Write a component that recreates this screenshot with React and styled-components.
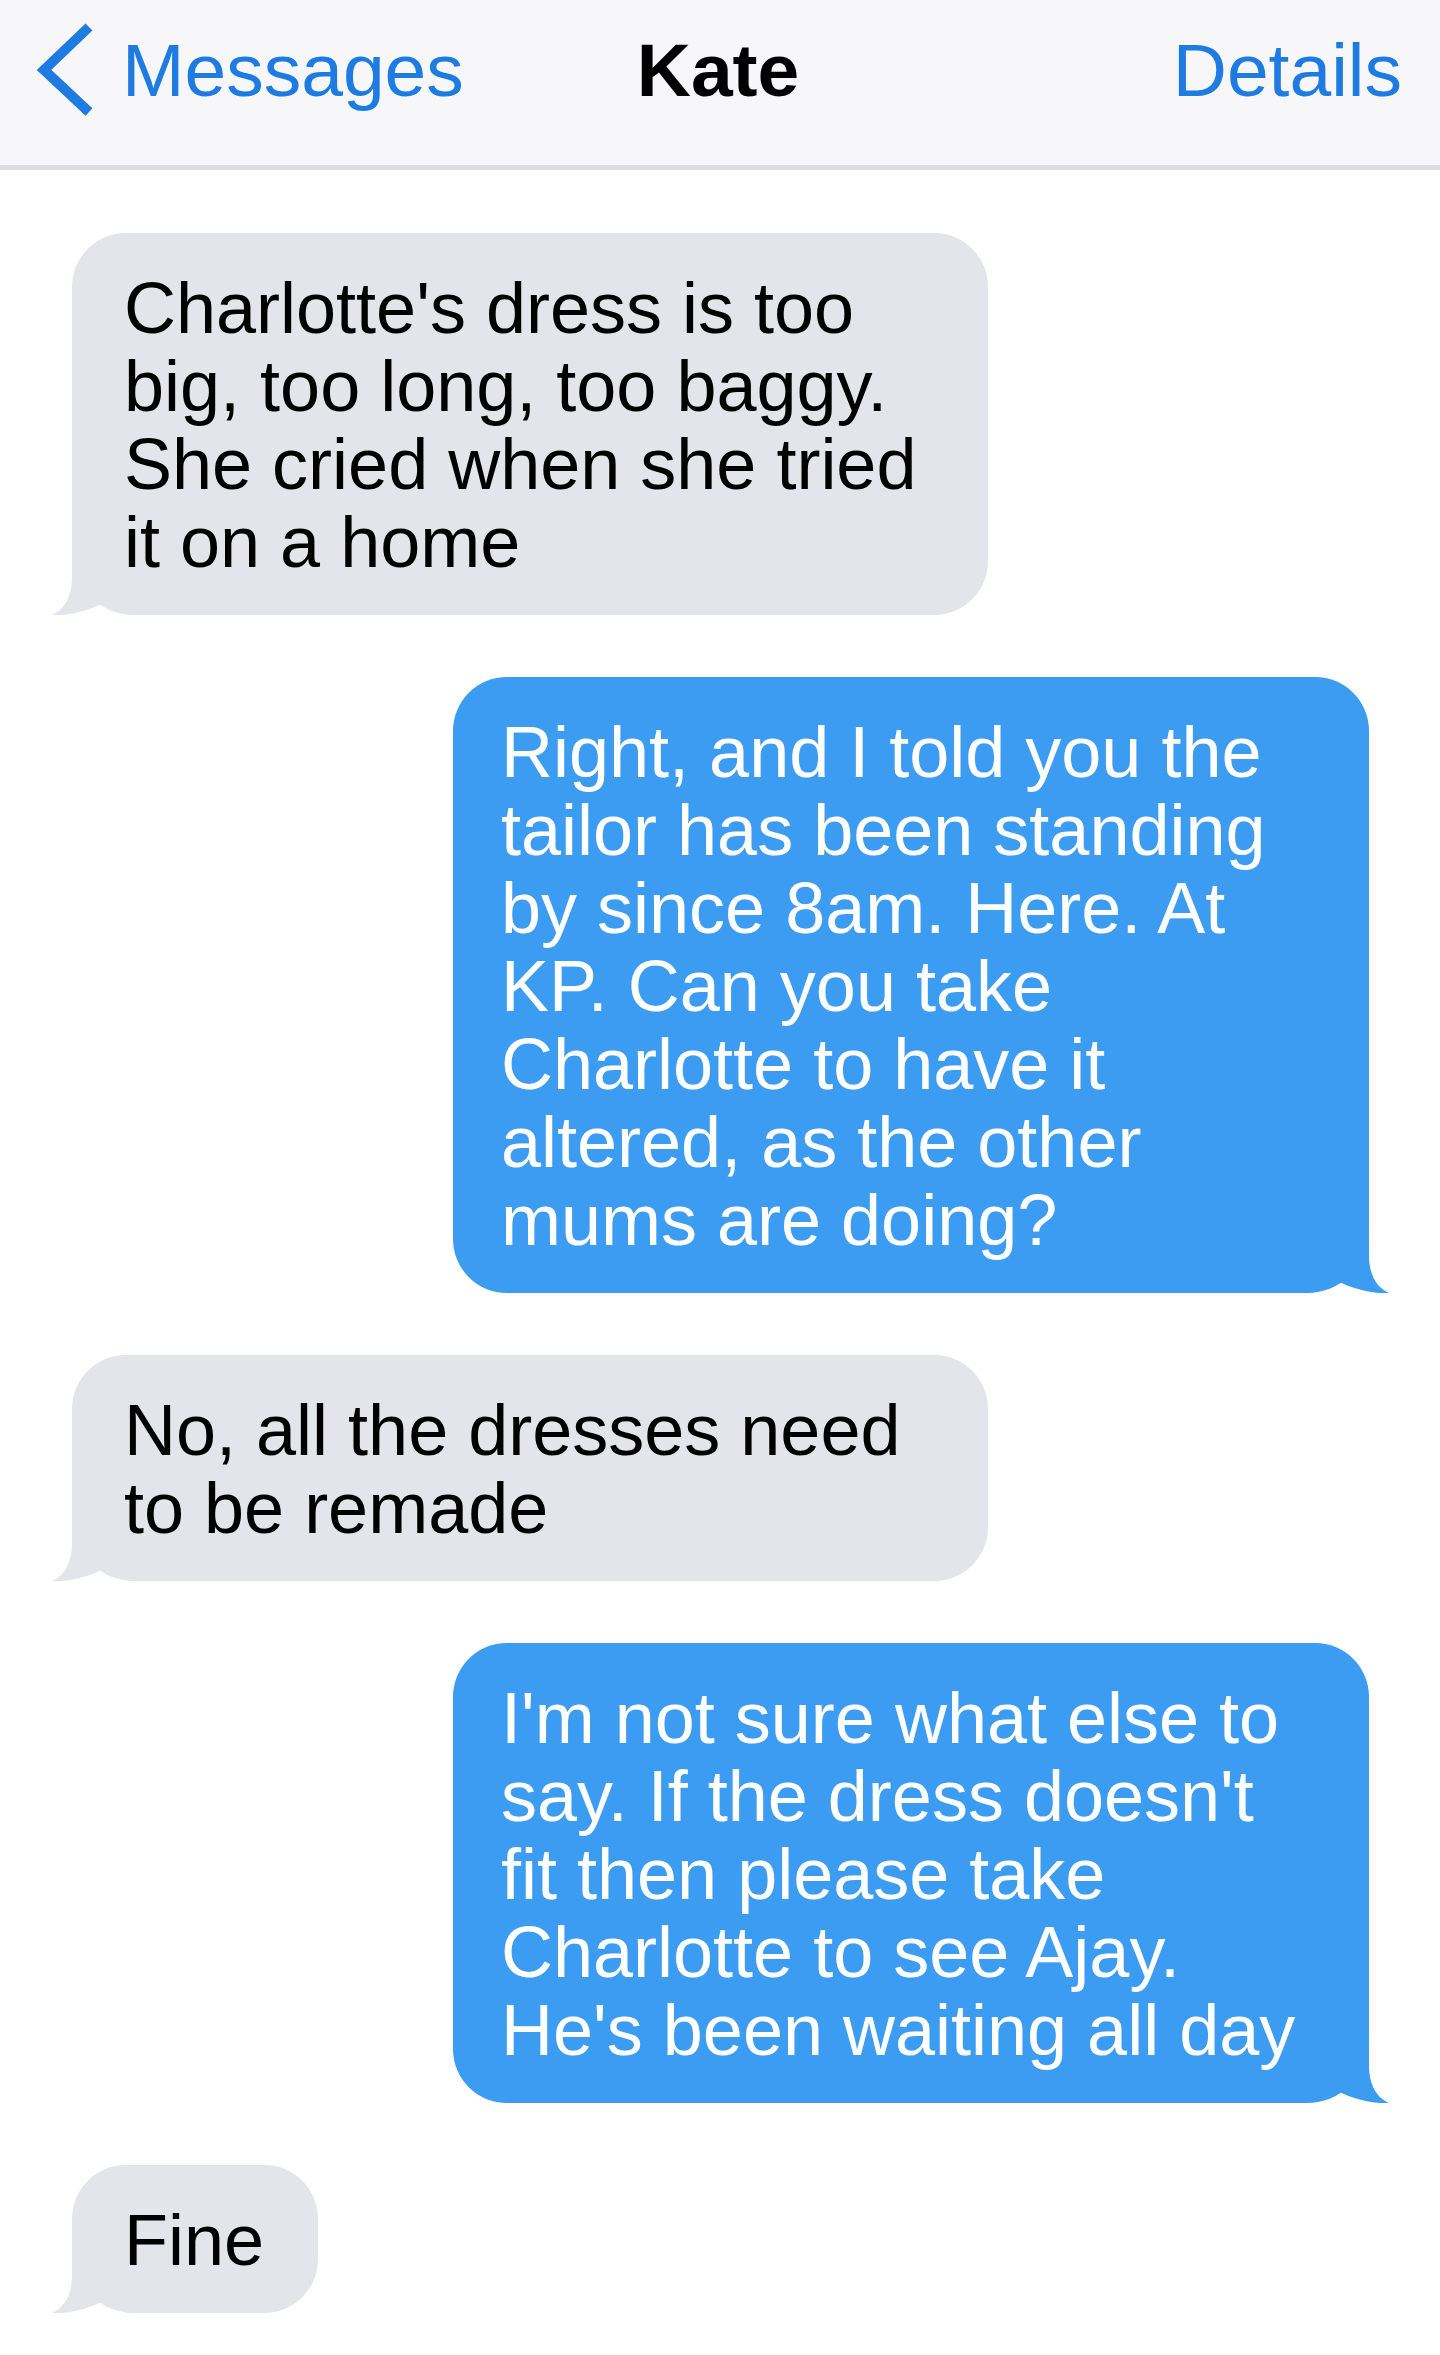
import React from 'react';
import styled, { createGlobalStyle, css } from 'styled-components';

const colors = {
    link: '#1e7be2',
    barBg: '#f7f7f9',
    barLine: '#dcdce1',
    theirs: '#e4e4eb',
    mine: '#3c9cf2',
};

const GlobalStyle = createGlobalStyle`
    html, body {
        margin: 0;
        padding: 0;
        background: #fff;
    }
    body {
        font-family: "Liberation Sans", Arial, Helvetica, sans-serif;
        -webkit-font-smoothing: antialiased;
    }
`;

const Screen = styled.div`
    width: 1440px;
    background: #fff;
`;

const NavBar = styled.header`
    display: grid;
    grid-template-columns: 1fr auto 1fr;
    align-items: start;
    height: 170px;
    padding: 27px 38px 0 34px;
    box-sizing: border-box;
    background: ${colors.barBg};
    border-bottom: 5px solid ${colors.barLine};
    font-size: 75px;
    line-height: 86px;
`;

const BackLink = styled.a`
    display: flex;
    align-items: flex-start;
    gap: 26px;
    color: ${colors.link};
    text-decoration: none;

    svg {
        flex: none;
        margin-top: -7px;
    }
`;

const Title = styled.div`
    color: #000;
    font-weight: 700;
`;

const DetailsLink = styled.a`
    justify-self: end;
    color: ${colors.link};
    text-decoration: none;
`;

const Thread = styled.main`
    display: flex;
    flex-direction: column;
    gap: 62px;
    padding: 63px 71px 42px 72px;
`;

// iOS 7 style hook at the bottom corner of a bubble
const tail = css`
    &::before {
        content: '';
        position: absolute;
        bottom: 0;
        width: 64px;
        height: 60px;
        background: inherit;
        clip-path: path('M20,0 L20,22 C20,44 11,55 0,60 C16,61 36,56 52,48 L64,38 L64,0 Z');
    }
`;

const Bubble = styled.div`
    position: relative;
    box-sizing: border-box;
    max-width: 916px;
    width: fit-content;
    font-size: 72px;
    line-height: 78px;
    border-radius: 54px;

    ${tail}

    ${(p) => p.$mine ? css`
        align-self: flex-end;
        padding: 36px 54px 34px 48px;
        background: ${colors.mine};
        color: #fff;
        border-bottom-right-radius: 62px;

        &::before {
            right: -20px;
            transform: scaleX(-1);
        }
    ` : css`
        align-self: flex-start;
        padding: 36px 54px 34px 52px;
        background: ${colors.theirs};
        color: #000;
        border-bottom-left-radius: 62px;

        &::before {
            left: -20px;
        }
    `}
`;

const ChevronLeft = () => (
    <svg width="62" height="100" viewBox="0 0 62 100" aria-hidden="true">
        <polyline
            points="55,7 10,50 55,92"
            fill="none"
            stroke={colors.link}
            strokeWidth="10"
            strokeLinejoin="miter"
        />
    </svg>
);

const messages = [
    { mine: false, text: "Charlotte's dress is too big, too long, too baggy. She cried when she tried it on a home" },
    { mine: true, text: 'Right, and I told you the tailor has been standing by since 8am. Here. At KP. Can you take Charlotte to have it altered, as the other mums are doing?' },
    { mine: false, text: 'No, all the dresses need to be remade' },
    { mine: true, text: "I'm not sure what else to say. If the dress doesn't fit then please take Charlotte to see Ajay. He's been waiting all day" },
    { mine: false, text: 'Fine' },
];

const App = () => {
    return (
        <React.Fragment>
            <GlobalStyle />
            <Screen>
                <NavBar>
                    <BackLink href="#">
                        <ChevronLeft />
                        <span>Messages</span>
                    </BackLink>
                    <Title>Kate</Title>
                    <DetailsLink href="#">Details</DetailsLink>
                </NavBar>
                <Thread>
                    {messages.map((m, i) => (
                        <Bubble key={i} $mine={m.mine}>{m.text}</Bubble>
                    ))}
                </Thread>
            </Screen>
        </React.Fragment>
    );
};

export default App;
